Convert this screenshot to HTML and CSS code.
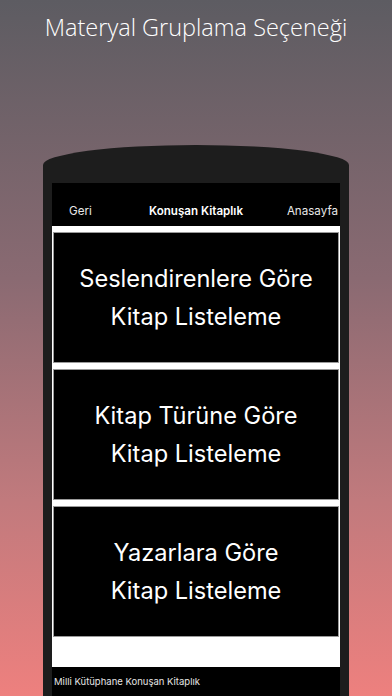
FILE: index.html
```html
<!DOCTYPE html>
<html lang="tr">
<head>
<meta charset="utf-8">
<title>Materyal Gruplama Seçeneği</title>
<link rel="stylesheet" href="styles.css">
</head>
<body>
<div class="page">
  <header class="hero">
    <h1 class="hero-title">Materyal Gruplama Seçeneği</h1>
  </header>
  <div class="phone">
    <div class="screen">
      <nav class="navbar">
        <span class="nav-left">Geri</span>
        <span class="nav-title">Konuşan Kitaplık</span>
        <span class="nav-right">Anasayfa</span>
      </nav>
      <main class="list">
        <div class="card"><p class="card-text">Seslendirenlere Göre<br>Kitap Listeleme</p></div>
        <div class="card"><p class="card-text">Kitap Türüne Göre<br>Kitap Listeleme</p></div>
        <div class="card"><p class="card-text">Yazarlara Göre<br>Kitap Listeleme</p></div>
      </main>
      <footer class="footer">Milli Kütüphane Konuşan Kitaplık</footer>
    </div>
  </div>
</div>
</body>
</html>
```
FILE: styles.css
```css
html, body {
  margin: 0;
  padding: 0;
}
body {
  width: 392px;
  height: 696px;
  overflow: hidden;
  background: linear-gradient(180deg, #5d5c62 0%, #8a6a72 40%, #c17a7d 72%, #ee807e 100%);
  font-family: Inter, "Noto Sans", sans-serif;
}
.page {
  display: flex;
  flex-direction: column;
  height: 696px;
}
.hero {
  height: 145px;
  flex: none;
}
.hero-title {
  margin: 0;
  padding-top: 11px;
  text-align: center;
  font-family: "Open Sans", sans-serif;
  font-weight: 300;
  font-size: 23.5px;
  line-height: 32px;
  color: #ffffff;
}
.phone {
  flex: 1;
  width: 288px;
  margin: 0 auto;
  padding: 38px 9px 0;
  background: #1d1d1d;
  border-radius: 153px 153px 0 0 / 20px 20px 0 0;
  display: flex;
}
.screen {
  flex: 1;
  display: flex;
  flex-direction: column;
  background: #ffffff;
}
.navbar {
  height: 43px;
  flex: none;
  background: #000;
  color: #fff;
  display: grid;
  grid-template-columns: 1fr auto 1fr;
  align-items: end;
  padding-bottom: 7px;
  box-sizing: border-box;
  font-size: 11.6px;
  line-height: 16px;
}
.nav-left {
  padding-left: 17px;
  color: #e8e8e8;
}
.nav-title {
  font-weight: 600;
}
.nav-right {
  text-align: right;
  padding-right: 2px;
  color: #e8e8e8;
  white-space: nowrap;
}
.list {
  display: flex;
  flex-direction: column;
  gap: 6px;
  padding: 6px 1px 0;
  height: 441px;
  flex: none;
  box-sizing: border-box;
}
.card {
  height: 131px;
  background: #000;
  border: 1px solid #9a9a9a;
  box-sizing: border-box;
  display: flex;
  align-items: center;
  justify-content: center;
}
.card-text {
  margin: 0;
  color: #fff;
  text-align: center;
  font-size: 23.6px;
  line-height: 38px;
  font-weight: 400;
}
.footer {
  flex: 1;
  background: #000;
  color: #e6e6e6;
  font-size: 9.5px;
  padding: 9px 0 0 2px;
}
```
